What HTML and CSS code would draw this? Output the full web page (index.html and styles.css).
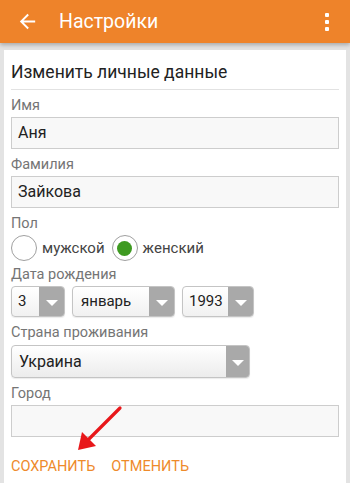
FILE: index.html
```html
<!DOCTYPE html>
<html lang="ru">
<head>
<meta charset="utf-8">
<link rel="stylesheet" href="styles.css">
</head>
<body>
<header class="bar">
  <svg class="back" viewBox="0 0 24 24" width="23" height="23"><path fill="#fff" d="M20 11H7.83l5.59-5.59L12 4l-8 8 8 8 1.41-1.41L7.83 13H20v-2z"/></svg>
  <div class="bar-title">Настройки</div>
  <div class="menu"><span></span><span></span><span></span></div>
</header>
<main class="card">
  <h1 class="card-title">Изменить личные данные</h1>
  <div class="label">Имя</div>
  <div class="input">Аня</div>
  <div class="label">Фамилия</div>
  <div class="input">Зайкова</div>
  <div class="label">Пол</div>
  <div class="gender">
    <span class="radio"></span><span class="opt">мужской</span>
    <span class="radio on"></span><span class="opt">женский</span>
  </div>
  <div class="label label-tight">Дата рождения</div>
  <div class="dates">
    <div class="select sel-day"><span class="val">3</span><span class="arr"></span></div>
    <div class="select sel-month"><span class="val">январь</span><span class="arr"></span></div>
    <div class="select sel-year"><span class="val">1993</span><span class="arr"></span></div>
  </div>
  <div class="label">Страна проживания</div>
  <div class="select sel-country"><span class="val">Украина</span><span class="arr"></span></div>
  <div class="label">Город</div>
  <div class="input"></div>
  <div class="actions">
    <span class="btn">СОХРАНИТЬ</span>
    <span class="btn">ОТМЕНИТЬ</span>
  </div>
  <svg class="pointer" width="60" height="60" viewBox="0 0 60 60">
    <line x1="48" y1="6" x2="14" y2="40" stroke="#e8171a" stroke-width="3.2" stroke-linecap="round"/>
    <polygon points="6,48 10,30 24,44" fill="#e8171a"/>
  </svg>
</main>
</body>
</html>
```
FILE: styles.css
```css
html, body {
  margin: 0;
  padding: 0;
}
body {
  width: 350px;
  height: 483px;
  overflow: hidden;
  background: #e3e3e3;
  font-family: Roboto, "Noto Sans", sans-serif;
}
.bar {
  height: 43px;
  background: #ee832a;
  display: flex;
  align-items: center;
  position: relative;
  box-shadow: 0 2px 4px rgba(0,0,0,0.25);
}
.back {
  margin-left: 16px;
  flex: none;
}
.bar-title {
  margin-left: 20px;
  color: #fff;
  font-size: 19.5px;
  line-height: 24px;
  flex: 1;
}
.menu {
  width: 4px;
  margin-right: 21px;
  display: flex;
  flex-direction: column;
  gap: 3px;
}
.menu span {
  width: 4px;
  height: 4px;
  background: #fff;
  border-radius: 1px;
}
.card {
  position: relative;
  margin: 7px 4px 0;
  height: 440px;
  background: #fff;
  padding: 0 7px;
  display: flex;
  flex-direction: column;
}
.card-title {
  margin: 0;
  padding: 11px 0 6px;
  font-weight: normal;
  font-size: 17.5px;
  line-height: 22px;
  color: #222;
  border-bottom: 1px solid #e2e2e2;
}
.label {
  margin-top: 7px;
  margin-bottom: 2px;
  font-size: 14.5px;
  line-height: 18px;
  color: #757575;
}
.label-tight {
  margin-top: 5px;
}
.input {
  box-sizing: border-box;
  height: 32px;
  background: #f8f8f8;
  border: 1.5px solid #cdcdcd;
  padding: 0 6px;
  font-size: 16px;
  line-height: 29px;
  color: #222;
}
.gender {
  height: 26px;
  display: flex;
  align-items: center;
}
.radio {
  box-sizing: border-box;
  width: 26px;
  height: 26px;
  border: 1.5px solid #a0a0a0;
  border-radius: 50%;
  background: #fff;
  display: flex;
  align-items: center;
  justify-content: center;
  flex: none;
}
.radio.on::after {
  content: "";
  width: 15px;
  height: 15px;
  border-radius: 50%;
  background: #3e9a21;
}
.opt {
  margin-left: 5px;
  margin-right: 7px;
  font-size: 15px;
  color: #444;
}
.dates {
  display: flex;
  gap: 7px;
}
.select {
  box-sizing: border-box;
  height: 31px;
  border: 1px solid #c4c4c4;
  border-radius: 4px;
  background: linear-gradient(#ffffff, #f1f1f1);
  display: flex;
  align-items: stretch;
  overflow: hidden;
  box-shadow: 0 1px 1px rgba(0,0,0,0.08);
}
.val {
  flex: 1;
  padding-left: 6px;
  font-size: 15px;
  line-height: 29px;
  color: #222;
}
.arr {
  width: 25px;
  background: #a9a9a9;
  display: flex;
  align-items: center;
  justify-content: center;
  flex: none;
}
.arr::after {
  content: "";
  width: 0;
  height: 0;
  border-left: 6px solid transparent;
  border-right: 6px solid transparent;
  border-top: 6px solid #fff;
  margin-top: 2px;
}
.sel-day { width: 54px; }
.sel-month { width: 103px; }
.sel-month .val { padding-left: 8px; }
.sel-year { width: 72px; }
.sel-country {
  width: 239px;
  height: 33px;
  margin-top: 1px;
  background: linear-gradient(#ffffff, #ececec);
}
.sel-country .val { line-height: 31px; padding-left: 7px; font-size: 16px; }
.sel-country .arr { width: 23px; }
.actions {
  margin-top: 21px;
  display: flex;
  gap: 16px;
}
.btn {
  font-size: 14.5px;
  line-height: 18px;
  color: #ee8a2b;
}
.pointer {
  position: absolute;
  left: 68px;
  top: 352px;
}
```
